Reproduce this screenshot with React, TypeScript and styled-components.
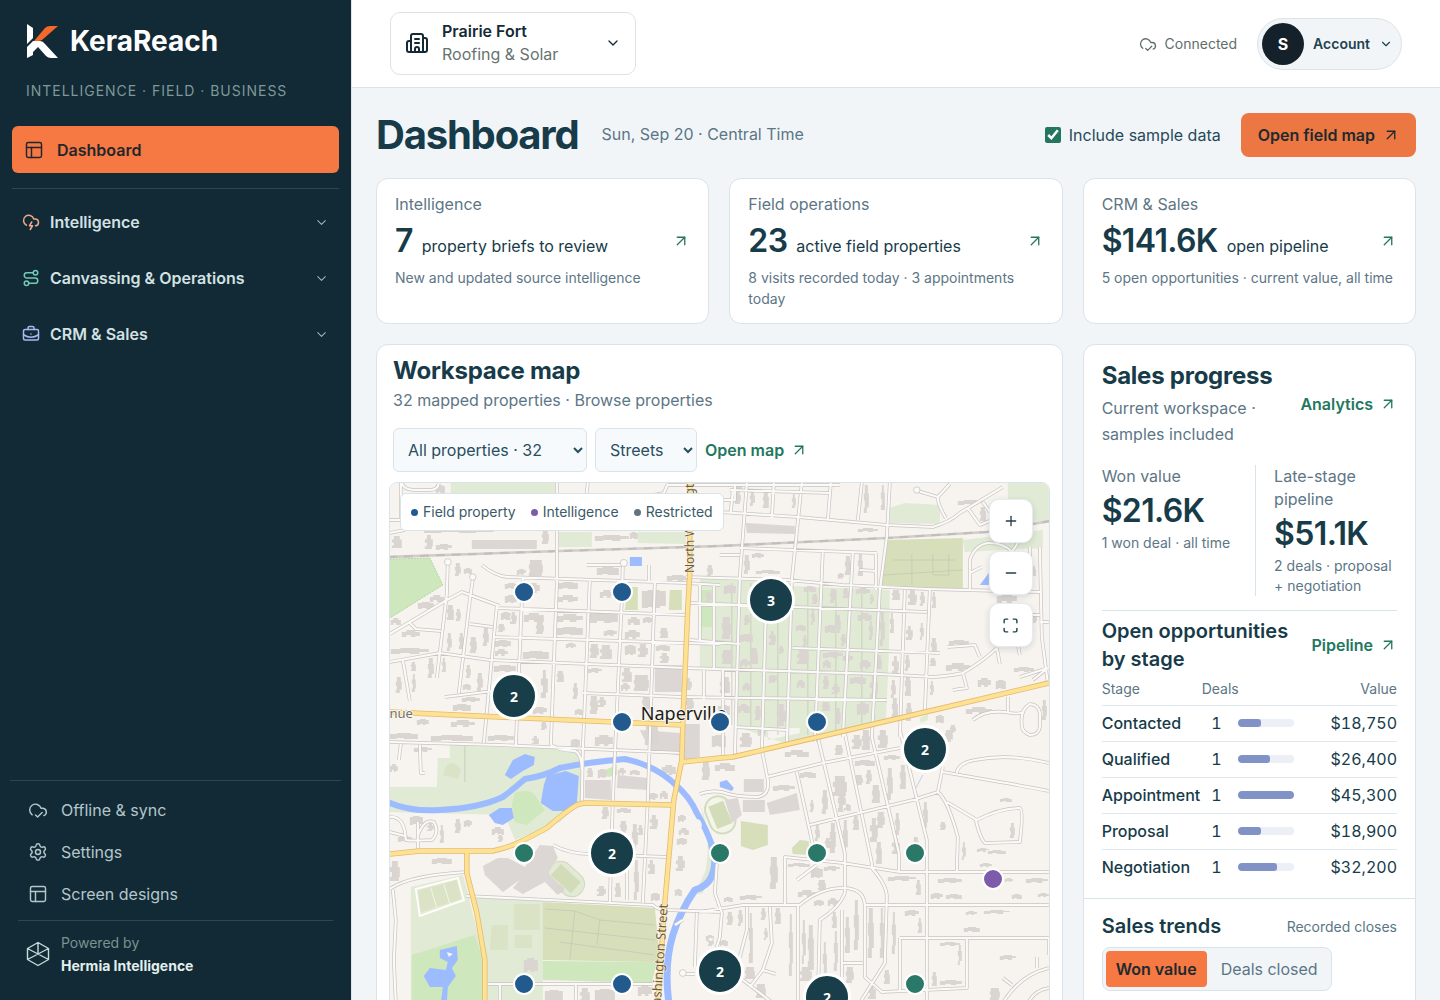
import React, { useState } from "react";
import styled, { createGlobalStyle, css } from "styled-components";
import {
  ArrowUpRight,
  BriefcaseBusiness,
  Building2,
  ChevronDown,
  CloudCheck,
  CloudLightning,
  Maximize,
  Minus,
  PanelsTopLeft,
  Plus,
  Route,
  Settings,
} from "lucide-react";

const color = {
  ink: "#173b49",
  body: "#284e5f",
  muted: "#5c7686",
  green: "#23775f",
  orange: "#f67843",
  line: "#d9e3ea",
  page: "#f1f5f8",
  night: "#112a36",
  blue: "#235a8e",
  teal: "#2a7868",
  purple: "#7d5bab",
  grey: "#66737c",
  cluster: "#183e4a",
};

const GlobalStyle = createGlobalStyle`
  *, *::before, *::after { box-sizing: border-box; }
  body { margin: 0; background: ${color.page}; }
  body, button, select, input { font-family: Inter, "Liberation Sans", sans-serif; }
  body { font-size: 16px; line-height: 24px; color: ${color.ink}; }
  h1, h2, h3, p { margin: 0; }
  a { color: inherit; text-decoration: none; }
  button { cursor: pointer; }
  svg { flex-shrink: 0; }
`;

/* ---------- Shell ---------- */

const Shell = styled.div`
  display: grid;
  grid-template-columns: 352px minmax(0, 1fr);
  height: 100vh;
`;

const Sidebar = styled.aside`
  display: flex;
  flex-direction: column;
  background: ${color.night};
  border-right: 1px solid #dfe6ea;
  color: #b9c9cd;
`;

const Brand = styled.a`
  display: flex;
  align-items: center;
  gap: 12px;
  margin: 24px 26px 0;
  height: 34px;
  color: #fff;
  font-size: 28px;
  font-weight: 700;
  line-height: 34px;
`;

const Tagline = styled.p`
  margin: 23px 26px 0;
  font-size: 14px;
  line-height: 20px;
  letter-spacing: 0.07em;
  color: #7f9799;
  white-space: nowrap;
`;

const Nav = styled.nav`
  display: flex;
  flex-direction: column;
  margin: 25px 12px 0;
`;

const ActiveLink = styled.a`
  display: flex;
  align-items: center;
  gap: 13px;
  height: 47px;
  padding: 0 12px;
  border-radius: 6px;
  background: ${color.orange};
  color: #1f272b;
  font-weight: 600;
`;

const NavGroups = styled.div`
  display: flex;
  flex-direction: column;
  gap: 8px;
  margin-top: 15px;
  padding-top: 9px;
  border-top: 1px solid #2e4650;
`;

const NavGroup = styled.button<{ $tint: string }>`
  display: flex;
  align-items: center;
  gap: 10px;
  height: 48px;
  padding: 0 10px;
  border: 0;
  background: none;
  color: #d3e1e3;
  font-size: 16px;
  font-weight: 600;
  text-align: left;
  span { flex: 1; }
  svg:first-child { color: ${(p) => p.$tint}; }
  svg:last-child { color: #9fb2b8; }
`;

const Utilities = styled.div`
  margin: auto 10px 0;
  padding: 8px 8px 0;
  border-top: 1px solid #2e4650;
`;

const UtilityLink = styled.a`
  display: flex;
  align-items: center;
  gap: 13px;
  height: 42px;
  padding: 0 10px;
  color: #b4c6ca;
`;

const Powered = styled.div`
  display: flex;
  align-items: center;
  gap: 10px;
  height: 80px;
  margin-top: 5px;
  padding: 0 7px 14px;
  border-top: 1px solid #2e4650;
  color: #7b928f;
  font-size: 14px;
  line-height: 23px;
  strong { display: block; font-weight: 700; color: #e3efed; }
  svg { color: #c7dbd6; }
`;

const Main = styled.main`
  display: flex;
  flex-direction: column;
  min-width: 0;
  overflow-y: auto;
  scrollbar-width: none;
`;

/* ---------- Top bar ---------- */

const TopBar = styled.header`
  display: flex;
  align-items: center;
  justify-content: space-between;
  flex-shrink: 0;
  height: 88px;
  padding: 0 38px;
  background: #fff;
  border-bottom: 1px solid #dce2e6;
`;

const Workspace = styled.button`
  display: flex;
  align-items: center;
  gap: 13px;
  width: 246px;
  height: 63px;
  padding: 0 14px 2px;
  border: 1px solid #dfe2e5;
  border-radius: 10px;
  background: #fff;
  color: #142a36;
  font-size: 16px;
  line-height: 23px;
  text-align: left;
  > span { flex: 1; }
  strong { display: block; font-weight: 600; }
  small { font-size: 16px; color: #66736f; }
`;

const TopRight = styled.div`
  display: flex;
  align-items: center;
  gap: 20px;
`;

const Status = styled.span`
  display: flex;
  align-items: center;
  gap: 8px;
  font-size: 14px;
  color: #5f6e6d;
`;

const Account = styled.button`
  display: flex;
  align-items: center;
  gap: 9px;
  height: 52px;
  padding: 0 8px 0 4px;
  border: 1px solid #dce4e8;
  border-radius: 26px;
  background: #f1f5f7;
  color: #1f4251;
  font-size: 14px;
  font-weight: 600;
`;

const Avatar = styled.span`
  display: grid;
  place-items: center;
  width: 42px;
  height: 42px;
  border-radius: 50%;
  background: #14202a;
  color: #fff;
  font-size: 16px;
  font-weight: 700;
`;

/* ---------- Content ---------- */

const Content = styled.div`
  padding: 25px 24px 24px;
`;

const TitleRow = styled.div`
  display: flex;
  align-items: center;
  margin-bottom: 21px;
  h1 {
    font-size: 40px;
    line-height: 44px;
    font-weight: 700;
    letter-spacing: -0.03em;
  }
  p { margin-left: 23px; padding-bottom: 2px; color: ${color.muted}; }
`;

const TitleActions = styled.div`
  display: flex;
  align-items: center;
  gap: 20px;
  margin-left: auto;
`;

const CheckLabel = styled.label`
  display: flex;
  align-items: center;
  gap: 8px;
  color: #26495a;
  input {
    width: 16px;
    height: 16px;
    margin: 0;
    accent-color: ${color.green};
  }
`;

const PrimaryLink = styled.a`
  display: flex;
  align-items: center;
  gap: 7px;
  height: 44px;
  padding: 0 16px 0 17px;
  border-radius: 8px;
  background: #ec7742;
  color: #1d2a2e;
  font-weight: 600;
`;

const Grid = styled.div`
  display: grid;
  grid-template-columns: repeat(3, minmax(0, 1fr));
  gap: 20px;
`;

const panel = css`
  background: #fff;
  border: 1px solid ${color.line};
  border-radius: 12px;
`;

const Kpi = styled.a`
  ${panel}
  display: flex;
  flex-direction: column;
  padding: 14px 18px;
  min-height: 146px;
  line-height: 22px;
  color: ${color.muted};
`;

const KpiRow = styled.span`
  display: flex;
  align-items: center;
  justify-content: space-between;
  height: 40px;
  margin: 6px 0;
  color: ${color.ink};
  svg { color: ${color.green}; }
`;

const KpiValue = styled.span`
  display: flex;
  align-items: baseline;
  gap: 9px;
  strong {
    font-size: 32px;
    line-height: 40px;
    font-weight: 600;
    letter-spacing: -0.02em;
  }
`;

const Note = styled.span`
  font-size: 14px;
  line-height: 21px;
  color: ${color.muted};
`;

const MapPanel = styled.section`
  ${panel}
  grid-column: span 2;
  padding: 10px 12px 12px;
`;

const PanelTitle = styled.h2`
  font-size: 24px;
  line-height: 32px;
  font-weight: 700;
  letter-spacing: -0.01em;
`;

const MapHead = styled.div`
  padding: 0 4px;
  color: ${color.muted};
  h2 { color: ${color.ink}; margin-bottom: 1px; }
`;

const Filters = styled.div`
  display: flex;
  align-items: center;
  gap: 8px;
  margin: 16px 0 10px;
`;

const Select = styled.select<{ $width: number }>`
  width: ${(p) => p.$width}px;
  height: 44px;
  padding: 0 0 0 10px;
  border: 1px solid ${color.line};
  border-radius: 6px;
  background-color: #f7fafc;
  color: ${color.body};
  font-size: 16px;
`;

const TextLink = styled.a`
  display: inline-flex;
  align-items: center;
  gap: 6px;
  color: ${color.green};
  font-weight: 600;
  white-space: nowrap;
`;

/* ---------- Map ---------- */

const MapFrame = styled.div`
  position: relative;
  height: 642px;
  border: 1px solid ${color.line};
  border-radius: 8px;
  overflow: hidden;
  > svg { display: block; width: 100%; height: 100%; }
`;

const Legend = styled.ul`
  position: absolute;
  top: 10px;
  left: 10px;
  display: flex;
  align-items: center;
  gap: 15px;
  height: 38px;
  margin: 0;
  padding: 0 10px;
  list-style: none;
  border: 1px solid ${color.line};
  border-radius: 6px;
  background: #fff;
  color: #395a69;
  font-size: 14px;
`;

const LegendItem = styled.li<{ $dot: string }>`
  display: flex;
  align-items: center;
  gap: 5px;
  &::before {
    content: "";
    width: 7px;
    height: 7px;
    border-radius: 50%;
    background: ${(p) => p.$dot};
  }
`;

const MapControls = styled.div`
  position: absolute;
  top: 16px;
  right: 16px;
  display: grid;
  gap: 8px;
`;

const MapButton = styled.button`
  display: grid;
  place-items: center;
  width: 44px;
  height: 44px;
  padding: 0;
  border: 1px solid #e6ebee;
  border-radius: 10px;
  background: #fff;
  color: #263f4a;
  box-shadow: 0 2px 6px rgba(20, 50, 60, 0.14);
`;

const Pin = styled.button<{ $x: number; $y: number; $tone: string; $cluster?: boolean }>`
  position: absolute;
  left: ${(p) => p.$x}px;
  top: ${(p) => p.$y}px;
  width: ${(p) => (p.$cluster ? 48 : 22)}px;
  height: ${(p) => (p.$cluster ? 48 : 22)}px;
  padding: 0;
  border: ${(p) => (p.$cluster ? 3 : 2)}px solid #fff;
  border-radius: 50%;
  background: ${(p) => p.$tone};
  color: #fff;
  font-family: "Noto Sans", sans-serif;
  font-size: 14px;
  font-weight: 700;
  transform: translate(-50%, -50%);
`;

type Mark = { x: number; y: number; tone: string; count?: number };

const marks: Mark[] = [
  { x: 134, y: 109, tone: color.blue },
  { x: 232, y: 109, tone: color.blue },
  { x: 232, y: 239, tone: color.blue },
  { x: 330, y: 239, tone: color.blue },
  { x: 427, y: 239, tone: color.blue },
  { x: 134, y: 501, tone: color.blue },
  { x: 232, y: 501, tone: color.blue },
  { x: 134, y: 370, tone: color.teal },
  { x: 330, y: 370, tone: color.teal },
  { x: 427, y: 370, tone: color.teal },
  { x: 525, y: 370, tone: color.teal },
  { x: 525, y: 501, tone: color.teal },
  { x: 603, y: 396, tone: color.purple },
  { x: 381, y: 117, tone: color.cluster, count: 3 },
  { x: 124, y: 213, tone: color.cluster, count: 2 },
  { x: 535, y: 266, tone: color.cluster, count: 2 },
  { x: 222, y: 370, tone: color.cluster, count: 2 },
  { x: 330, y: 488, tone: color.cluster, count: 2 },
  { x: 437, y: 514, tone: color.cluster, count: 2 },
];

const streets = [
  // north-west grid
  "M448 562L447 594L437 678", "M473 579L470 600L459 693", "M497 606L484 743", "M523 577L516 745",
  "M557 483L557 585L551 745", "M590 580L583 750L582 802", "M623 565L622 600L613 800L610 903",
  "M655 583L648 800L643 903", "M587 565H623", "M649 565V583",
  "M482 565Q495 576 508 577L686 583L720 585", "M497 608L686 615", "M493 637L686 643L720 644",
  "M390 662L440 653L490 660L686 668L720 669", "M445 697L493 691", "M583 693L682 697",
  "M390 742L500 745L683 753", "M390 634L447 600L462 592L500 606", "M410 623L416 629L441 631", "M470 624L493 627",
  "M403 660L410 701", "M401 744L399 760M420 745L421 773H425", "M551 745Q558 750 575 751Q582 754 582 770",
  "M390 520H401V483M402 483Q404 490 415 490H430Q438 490 439 483", "M627 500L664 493L668 484", "M588 483L586 500",
  "M700 500H735V485M668 485H840", "M390 533L405 530",
  // north-east grid
  "M730 490L830 493", "M720 512L798 517L887 525L933 527Q950 522 960 513L1003 487", "M740 548L877 553", "M720 555H740",
  "M686 577L787 580L843 585L927 589L1040 592", "M690 603L927 612", "M793 648L940 653", "M690 640L740 644",
  "M683 668L880 674L933 677Q950 676 963 673Q985 660 997 648", "M683 697L887 700", "M735 727L787 730",
  "M747 483L740 577L735 757", "M733 490L731 512M774 483L772 518", "M802 483L792 580L787 746", "M831 483L828 520", "M862 483L858 520",
  "M890 483L887 537L880 590L872 737", "M823 550L815 742", "M853 553L843 737", "M767 577L762 753", "M905 590L900 737",
  "M930 590L925 712", "M1040 547L1042 637L1048 683", "M1033 680L1048 668M1020 677L1048 668", "M997 648L1000 664M1018 645L1020 655M948 647L975 645L980 657",
  "M963 673L967 688L953 690", "M1008 697V712", "M973 720Q985 710 1005 712Q1020 715 1022 712", "M1022 725Q1020 710 1030 704Q1042 705 1040 720Q1042 735 1030 735Q1022 732 1022 725",
  "M918 491L938 497Q938 505 946 518M938 497L950 484", "M968 508L980 525L992 520M983 502L990 512", "M970 589V560Q975 545 988 543Q1005 543 1012 552L1018 543",
  "M1030 547V590M1015 615H1040M1030 610V635M1040 622H1049", "M860 570L877 571M876 553V590M970 573L982 567",
  "M700 583V640M714 585V668M700 605H714M704 668V700M723 670V757",
  // south-east quarter
  "M762 750L768 780Q770 795 758 797Q735 797 722 792Q710 790 700 794", "M767 777L823 763L900 748", "M797 772L817 863", "M818 737L845 853V893",
  "M845 733L872 863V868Q887 885 887 897L885 963L860 1003", "M872 737L899 853V872", "M900 730L927 840V1003",
  "M810 825L913 800L938 792L943 767", "M785 904V857L843 863L900 872H1049", "M817 865L797 880",
  "M700 912L743 905H800Q820 888 843 888Q864 888 865 905H1049", "M865 905V977L882 992L967 988V938", "M900 938H1049M900 938V992",
  "M938 792Q948 800 958 837L957 871", "M947 802L977 820Q1000 808 1020 808Q1024 810 1020 842L985 843Q980 838 976 820",
  "M943 772L1000 782Q1030 787 1049 791", "M957 773Q958 763 975 760Q1010 753 1049 763", "M717 864L715 893L722 913L720 937L716 950",
  "M747 907V930L740 957", "M770 907L772 943L763 970L750 987M763 970L776 974", "M798 905V1003", "M845 893Q840 907 820 920L818 1003",
  "M842 910V977M842 963H863", "M743 980L773 1003H800", "M1049 968Q1020 975 1003 1003M1037 968V957M1003 978L1012 985M1049 988Q1035 990 1028 1003",
  "M1049 955V938",
  // south-west quarter
  "M390 889Q410 875 467 872", "M467 896L653 905Q658 910 667 910L720 912", "M393 890L396 920L394 960L396 1003", "M487 984H653",
  "M418 822V850M390 817Q405 816 406 840Q410 841 432 840Q440 832 434 822Q425 818 418 835M390 832L405 836", "M553 845Q570 854 590 854L667 857",
  "M627 850V900", "M697 913L695 967M683 974L695 974", "M683 920L675 925", "M576 984V1003M500 984V1003",
];

const mainRoads = [
  "M690 483V573L688 607L683 723L682 760L674 800L665 903L658 1003",
  "M390 712L500 717L683 725",
  "M682 762L720 758L733 757L797 742L900 718L1049 683",
  "M390 854L420 851H493Q510 847 520 842Q540 832 547 828Q565 812 577 805Q582 803 587 803L673 805",
  "M467 852V873L477 913L485 960V1003",
];

const parks = {
  pale: [
    "M390 787H437L438 758H450V745L575 750L583 760L582 802L560 822L515 840L505 815L390 812Z",
    "M451 483H557V493H451ZM559 532H592V547H559ZM638 532H686V544L638 543Z",
    "M890 508L905 503L940 505L940 524L890 523ZM1008 483H1049V520L1008 525ZM963 540L1043 530V548L965 552Z",
    "M700 578L787 580L792 586L890 590L889 655L886 722L787 744L738 727V672L700 667Z",
    "M411 887L463 875L468 893L484 960V1003H411Z",
    "M473 898L543 901V1003H488L485 960Z",
    "M768 740L800 733V728H768ZM920 718L928 714V720L921 723Z",
    "M700 805Q712 830 706 870L695 895L703 893L715 868L710 840Z",
  ],
  fresh: [
    "M390 559L430 558L443 585L390 618Z",
    "M412 955L475 935L484 962V1003H412Z",
    "M515 793Q530 788 535 795L545 810L527 825L515 822L512 805Z",
    "M543 961L657 962L652 983L543 980Z",
    "M605 770L617 765V775L608 777ZM701 590H713V627H701Z",
  ],
  olive: [
    "M887 540L963 538V589L881 587Z",
    "M543 902L655 908L660 958L653 962L543 960Z",
    "M741 821L768 825V845L753 850L741 846Z",
    "M792 848L800 840L809 841V855L793 854Z",
    "M628 587H638V610H625ZM670 590H682V610H669Z",
  ],
  faint: [
    "M447 765Q455 760 461 770L458 779L443 775Z",
    "M514 904H540V930H514ZM492 925H508V950H490ZM515 935H532V948H515Z",
  ],
};

const water = [
  "M505 775L513 760L525 754L535 757L534 765L523 771L511 779Z",
  "M547 776L566 771L579 776L577 803L567 811L553 811L541 803L544 785Z",
  "M489 815L500 808L512 808L514 818L503 825L495 823Z",
  "M440 950L457 946L458 960L452 968L456 976L448 987L447 1003H441L443 987L430 987L424 976L430 968L446 970L448 962L440 958Z",
  "M630 557H642V566H630Z",
  "M980 585L989 573V585Z",
  "M720 782L727 780L734 788L732 791L720 787Z",
];

const landmarks = [
  "M483 866L498 858L508 858L525 867L540 845L553 846L558 858L548 873L565 890L558 895L545 882L523 894L513 888L520 880L503 892L485 875Z",
  "M767 803L797 793L800 810L770 815ZM743 800H765V812H743ZM744 779H764V792H744Z",
  "M725 800L738 798L742 815L732 823Z",
  "M640 730L680 733L682 756L650 750ZM684 724H700V757L684 760ZM655 665H682V692H655ZM746 523L795 526V534L747 533Z",
  "M472 540H537V549H472ZM585 780H611V800L585 798ZM618 775L648 778V790L617 788Z",
];

// Building footprints: x, y, width, height on the map plane.
const footprints: number[][] = [
  [436,485,9,8],[425,535,8,14],[436,544,16,6],[392,536,10,12],[542,530,7,14],[595,535,34,6],[630,532,8,7],[424,530,70,3],
  [455,563,6,13],[464,568,8,6],[529,560,14,16],[517,569,9,6],[597,567,22,8],[667,575,22,6],[707,565,6,12],
  [505,583,13,6],[505,595,12,8],[527,583,13,10],[558,582,20,7],[558,595,20,7],[642,590,24,18],[430,595,14,7],[418,602,16,7],[600,590,14,8],
  [447,605,7,15],[456,609,5,12],[447,633,5,18],[459,633,5,16],[470,637,7,16],[483,628,6,18],[501,612,10,8],[510,612,7,12],[498,624,7,8],
  [524,613,20,9],[536,622,8,12],[557,614,26,8],[557,627,26,8],[590,612,28,11],[604,630,13,6],[628,617,12,8],[643,617,10,6],[625,630,15,9],[660,628,8,10],
  [402,630,18,7],[391,648,38,6],[391,618,10,7],[495,640,16,7],[495,649,13,7],[523,651,26,8],[566,643,10,5],[590,644,9,14],[600,645,12,14],[625,645,11,10],[638,644,10,13],[656,645,14,6],[660,653,9,10],
  [396,677,6,16],[411,662,5,9],[412,674,4,18],[428,658,6,20],[442,658,4,14],[466,665,5,13],[477,673,6,18],[463,684,8,6],[494,665,22,7],[541,670,7,28],[557,671,7,11],[573,683,5,16],[588,668,14,5],[622,668,10,14],[634,675,15,16],[621,683,9,8],
  [453,704,18,7],[462,697,18,5],[533,707,14,7],[575,709,8,6],[590,696,8,18],[598,697,8,10],[642,697,8,12],[683,678,9,12],[686,697,8,14],
  [390,733,28,6],[417,719,12,6],[451,720,24,7],[431,735,42,6],[488,735,26,6],[541,722,6,8],[532,736,7,8],[571,739,9,8],[595,735,18,11],[645,725,14,20],
  [390,764,8,8],[414,747,18,5],[587,768,6,9],[598,769,9,9],[618,768,8,7],[630,770,10,5],[662,765,14,10],[648,793,10,7],[660,791,8,8],
  [410,816,13,9],[427,823,7,8],[440,825,4,18],[455,819,6,14],[464,820,8,7],[492,827,12,8],[498,834,5,8],[398,836,14,6],[432,858,20,6],[390,861,10,20],
  [602,807,7,12],[617,808,14,5],[620,821,7,12],[632,824,6,26],[638,825,5,10],[650,815,8,14],[634,860,5,40],[648,860,7,14],[651,893,9,8],[597,886,9,10],[615,883,6,14],[555,885,9,8],
  [678,815,8,7],[679,828,10,7],[677,838,10,7],[676,856,9,15],[675,889,7,7],[524,958,14,14],[545,990,18,12],[580,988,10,14],[595,989,20,12],[638,985,14,11],
  [736,485,6,6],[735,491,6,13],[750,491,5,15],[763,492,6,16],[792,494,4,14],[864,485,5,28],[881,485,4,25],[858,528,20,4],[958,500,26,5],[980,507,6,14],[752,553,12,5],[744,555,6,19],[756,570,24,4],[845,556,6,19],[838,573,6,6],[858,554,5,22],
  [724,585,12,9],[706,592,6,10],[804,586,12,6],[812,594,6,10],[830,589,6,14],[843,588,6,10],[856,588,14,6],[870,594,4,10],[892,590,8,10],[908,590,9,15],[920,592,5,14],[932,592,4,16],
  [722,617,9,22],[744,615,6,10],[740,634,13,8],[769,631,7,14],[779,646,5,8],[796,625,10,6],[803,635,4,12],[811,609,4,16],[825,625,12,8],[835,615,6,18],[841,634,5,12],[858,613,14,8],[869,620,4,20],[880,612,5,34],[890,613,4,20],[906,626,7,14],[920,623,4,17],[931,638,6,16],
  [722,650,11,14],[740,659,10,8],[750,648,8,16],[797,650,12,14],[823,652,20,6],[823,660,8,8],[843,655,10,6],[860,660,11,9],[876,655,6,14],[892,656,7,18],[905,655,5,16],[930,658,6,8],[949,640,20,5],[946,663,24,8],
  [720,677,10,16],[743,683,8,8],[769,675,8,8],[797,680,8,8],[823,676,6,13],[832,684,8,10],[850,677,16,7],[870,676,8,22],[891,680,5,18],[905,674,6,22],[930,681,4,14],[978,678,13,9],[996,680,10,9],[1014,667,20,5],
  [718,705,12,12],[738,704,12,9],[755,706,6,14],[777,704,9,22],[822,702,8,9],[835,708,6,16],[857,703,12,12],[892,698,6,20],[906,703,6,18],[966,707,26,7],[936,715,8,8],[1042,700,5,20],[950,725,6,8],[1032,566,4,10],[1032,613,5,10],[997,594,20,9],
  [712,735,14,12],[740,733,12,14],[758,728,8,8],[785,750,24,7],[835,745,8,10],[852,735,10,14],[862,730,8,20],[878,730,10,18],[945,730,8,12],[715,763,20,8],[702,762,8,18],
  [773,785,22,6],[800,772,16,6],[833,776,14,20],[838,792,8,20],[855,760,20,6],[855,775,8,10],[866,770,6,14],[872,785,8,18],[884,755,16,5],[887,768,6,32],[900,765,6,24],[810,800,4,12],[822,790,6,24],[843,804,8,7],[923,802,5,26],
  [815,825,5,16],[825,838,6,10],[830,823,6,30],[843,820,5,34],[853,816,6,14],[870,818,8,24],[877,812,8,16],[876,842,6,22],[895,813,5,22],[892,838,8,16],[913,837,6,16],[940,822,6,8],[962,842,4,18],[1000,798,12,4],[1010,823,5,15],[977,848,12,4],[988,850,18,4],[980,863,12,4],
  [770,857,8,32],[788,863,22,4],[811,868,12,10],[824,866,16,5],[818,880,8,10],[798,890,18,7],[888,876,28,5],[916,880,5,15],[938,878,24,5],[931,893,12,6],[946,894,16,5],[1005,878,8,4],[1026,878,22,5],[1012,894,10,5],[1038,893,11,4],
  [740,895,22,5],[724,897,9,5],[727,912,6,13],[738,910,5,16],[749,913,4,50],[761,908,5,12],[764,928,4,12],[775,908,6,16],[789,914,4,62],[802,920,4,44],[808,925,6,45],[814,900,10,6],[828,898,10,8],[832,912,5,16],[834,931,4,40],[823,942,4,40],[845,917,5,36],[854,900,5,50],[868,908,6,50],[880,908,4,50],[892,912,4,42],
  [905,910,14,6],[918,918,4,15],[966,911,11,4],[984,910,26,4],[964,927,16,5],[940,942,20,4],[958,945,4,20],[932,972,5,14],[940,980,22,5],[1000,955,16,5],[745,967,10,12],[800,967,12,14],[846,967,8,16],[884,970,6,14],[990,988,10,12],[708,938,6,8],[720,940,8,6],[706,935,8,6],[756,984,10,14],[868,985,8,14],
];

// Turns a plain rectangle into a footprint with small setbacks along its long side.
function footprintPath([x, y, w, h]: number[], i: number) {
  const d = Math.min(w, h) > 6 ? 1 + (i % 2) : 1;
  if (w >= h) {
    const a = x + w * 0.25;
    const b = x + w * 0.5;
    const c = x + w * 0.75;
    return `M${x} ${y + d}H${a}V${y}H${c}V${y + d}H${x + w}V${y + h - (i % 3)}H${c}V${y + h}H${b}V${y + h - d}H${a}V${y + h}H${x}Z`;
  }
  const a = y + h * 0.3;
  const b = y + h * 0.55;
  const c = y + h * 0.8;
  return `M${x + d} ${y}V${a}H${x}V${b}H${x + d}V${c}H${x}V${y + h}H${x + w - (i % 3)}V${c}H${x + w}V${a}H${x + w - d}V${y}Z`;
}

const lots =
  "M732 583V725M751 583V726M778 583V735M808 590V735M836 590V735M862 592V730M713 590V640M893 560H955M912 554V585M933 554V575M949 554V575M934 575H949M884 575L962 570M545 909L575 911L600 920L655 925M575 911L570 960M600 920L597 945M545 928L655 940M560 942L655 955M465 746V782";

const railway = "M388 557L560 551L720 546L887 538L987 532L1050 521";

function StreetMap() {
  return (
    <svg viewBox="390 483 659 640" preserveAspectRatio="xMidYMin slice" role="img" aria-label="Street map of Naperville">
      <rect x="380" y="473" width="680" height="660" fill="#f7f3ef" />
      <path d={parks.pale.join("")} fill="#e0ead4" />
      <path d={parks.fresh.join("")} fill="#cfe7bd" />
      <path d={parks.olive.join("")} fill="#d6dfba" />
      <path d={parks.faint.join("")} fill="#dae3c5" />
      <path d="M390 559L430 558L443 585L390 618" fill="none" stroke="#9ccb8a" strokeDasharray="2 1" strokeWidth="0.7" />
      <path d={lots} fill="none" stroke="#c3c9b6" strokeWidth="0.8" />
      <path d="M416 889L458 878L464 900L420 916Z" fill="none" stroke="#fffdfa" strokeWidth="2" />
      <path d="M418 891L457 880L461 899L421 912Z" fill="#dae3c5" />
      <path d="M431 888L437 908M444 884L450 904" stroke="#f4f5ea" strokeWidth="1" />
      <g transform="rotate(42 566 878)">
        <rect x="547" y="866" width="40" height="25" rx="12" fill="#e2ead6" stroke="#d1d9bd" />
        <rect x="553" y="871" width="27" height="15" fill="#d2dcb9" />
      </g>
      <g transform="rotate(-22 720 814)">
        <rect x="707" y="796" width="26" height="38" rx="13" fill="#f4f5ea" stroke="#d3dcbd" strokeWidth="2" />
        <rect x="712" y="803" width="16" height="24" fill="#d2dcb9" />
      </g>
      <path d={landmarks.join("")} fill="#dcd7d4" />
      <path d={footprints.map(footprintPath).join("")} fill="#dad5d1" />
      <g fill="none" stroke="#9dbbff" strokeLinejoin="round" strokeLinecap="round">
        <path d="M388 802Q410 812 440 810Q480 808 503 797Q515 788 525 779Q545 776 560 768Q590 762 625 759Q655 765 676 785" strokeWidth="6" />
        <path d="M676 785Q690 797 697 813Q706 828 712 845" strokeWidth="6" />
        <path d="M712 845Q718 862 712 876Q708 886 695 890Q680 912 673 935Q664 965 669 1003" strokeWidth="7" />
      </g>
      <path d={water.join("")} fill="#9dbbff" />
      <path d="M697 819Q702 819 702 827Q698 828 697 819M447 952L453 954L449 957Z" fill="#f7f3ef" />
      <path d="M923 775L916 788" stroke="#a9c8f4" strokeWidth="0.8" />
      <g fill="none" strokeLinejoin="round">
        <path d={railway} stroke="#d0cdca" strokeWidth="2.6" />
        <path d={railway} stroke="#c0bdba" strokeWidth="2" strokeDasharray="9 7" />
        <path d={streets.join("")} stroke="#c8c4c1" strokeWidth="3.6" />
        <path d={streets.join("")} stroke="#fbfaf8" strokeWidth="2.2" />
        <path d={mainRoads.join("")} stroke="#e6b96f" strokeWidth="5.4" />
        <path d={mainRoads.join("")} stroke="#fde293" strokeWidth="3.8" />
      </g>
      <g fill="#fbfaf8" stroke="#c8c4c1" strokeWidth="0.8">
        <circle cx="448" cy="562" r="3.4" />
        <circle cx="473" cy="577" r="3.2" />
        <circle cx="624" cy="563" r="3.6" />
        <circle cx="917" cy="490" r="3.2" />
        <circle cx="683" cy="973" r="3.4" />
      </g>
      <g fontFamily="'Noto Sans', sans-serif" stroke="#f9f6ef" strokeWidth="2" strokeLinejoin="round" paintOrder="stroke">
        <text x="641" y="720" fontSize="18" fill="#1c1c1c">Naperville</text>
        <text x="413" y="718" fontSize="13" fill="#76706a" textAnchor="end">West Jackson Avenue</text>
        <text transform="translate(694 573) rotate(-90)" fontSize="12" fill="#6d5a35" strokeWidth="1">North Washington Street</text>
        <text transform="translate(668 904) rotate(-86)" fontSize="13" fill="#6d5a35" strokeWidth="1" textAnchor="end">Washington Street</text>
      </g>
    </svg>
  );
}

/* ---------- Sales panel ---------- */

const SalesPanel = styled.section`
  ${panel}
`;

const SalesBody = styled.div`
  padding: 15px 18px 13px;
`;

const Split = styled.div`
  display: flex;
  align-items: center;
  justify-content: space-between;
  gap: 12px;
`;

const SalesIntro = styled.p`
  margin-top: 3px;
  line-height: 26px;
  color: ${color.muted};
`;

const Stats = styled.div`
  display: grid;
  grid-template-columns: max-content minmax(0, 1fr);
  margin-top: 18px;
  padding-bottom: 14px;
  border-bottom: 1px solid ${color.line};
`;

const Stat = styled.div`
  display: flex;
  flex-direction: column;
  line-height: 23px;
  color: ${color.muted};
  strong {
    font-size: 32px;
    line-height: 45px;
    font-weight: 600;
    letter-spacing: -0.02em;
    color: ${color.ink};
  }
  small { font-size: 14px; line-height: 20px; }
  &:first-child { padding-right: 25px; border-right: 1px solid ${color.line}; }
  &:last-child { padding-left: 18px; }
`;

const SubTitle = styled.h3`
  font-size: 20px;
  line-height: 28px;
  font-weight: 600;
`;

const StageHead = styled(Split)`
  margin-top: 6px;
`;

const Table = styled.table`
  width: 100%;
  border-collapse: collapse;
  font-variant-numeric: tabular-nums;
  th { text-align: left; padding: 0; }
  thead th { height: 32px; font-size: 14px; font-weight: 400; color: ${color.muted}; }
  tbody th { width: 100px; font-weight: 500; }
  tbody tr { height: 36px; border-top: 1px solid #dfe8ee; }
  td { padding: 0; }
  th:last-child, td:last-child { text-align: right; }
`;

const Deals = styled.span`
  display: flex;
  align-items: center;
  gap: 16px;
  span { width: 20px; text-align: right; }
`;

const Track = styled.i`
  width: 56px;
  height: 8px;
  border-radius: 4px;
  background: #eceff6;
  overflow: hidden;
`;

const Fill = styled.b`
  display: block;
  height: 8px;
  border-radius: 3px;
  background: #8192c7;
`;

const Trends = styled.div`
  padding: 13px 18px 18px;
  border-top: 1px solid ${color.line};
`;

const Segments = styled.div`
  display: inline-flex;
  height: 44px;
  margin-top: 7px;
  padding: 3px;
  border: 1px solid ${color.line};
  border-radius: 8px;
  background: #f1f5f8;
`;

const Segment = styled.button<{ $on: boolean }>`
  padding: 0 10px;
  margin-right: ${(p) => (p.$on ? 4 : 0)}px;
  border: 0;
  border-radius: 4px;
  background: ${(p) => (p.$on ? color.orange : "transparent")};
  color: ${(p) => (p.$on ? "#1d2a2e" : color.muted)};
  font-size: 16px;
  font-weight: ${(p) => (p.$on ? 600 : 400)};
`;

const stages = [
  { name: "Contacted", deals: 1, value: 18750 },
  { name: "Qualified", deals: 1, value: 26400 },
  { name: "Appointment", deals: 1, value: 45300 },
  { name: "Proposal", deals: 1, value: 18900 },
  { name: "Negotiation", deals: 1, value: 32200 },
];
const topValue = Math.max(...stages.map((s) => s.value));

const kpis = [
  { label: "Intelligence", value: "7", unit: "property briefs to review", note: "New and updated source intelligence" },
  { label: "Field operations", value: "23", unit: "active field properties", note: "8 visits recorded today · 3 appointments today" },
  { label: "CRM & Sales", value: "$141.6K", unit: "open pipeline", note: "5 open opportunities · current value, all time" },
];

const Arrow = () => <ArrowUpRight size={18} strokeWidth={1.75} />;

const BrandMark = () => (
  <svg width="32" height="34" viewBox="0 0 32 34" aria-hidden="true">
    <path d="M1 0L7 4V14L1 20Z" fill="#fff" />
    <path d="M8 17L19 4Q21 2 24 2H32L16 16Q14 17 12 17Z" fill="#f4682c" />
    <path d="M1 23L7 17H14Q17 17 19 20L32 34H25Q22 34 20 32L12 23L7 28V31L1 34Z" fill="#fff" />
  </svg>
);

const HermiaMark = () => (
  <svg width="26" height="26" viewBox="0 0 26 26" fill="none" stroke="currentColor" strokeWidth="1.4" strokeLinejoin="round" aria-hidden="true">
    <path d="M13 1.5L23.5 7.5V18.5L13 24.5L2.5 18.5V7.5ZM13 1.5V13M2.5 7.5L13 13L23.5 7.5M2.5 18.5L13 13L23.5 18.5" />
  </svg>
);

export default function App() {
  const [samples, setSamples] = useState(true);
  const [metric, setMetric] = useState("won");

  return (
    <>
      <GlobalStyle />
      <Shell>
        <Sidebar>
          <Brand href="#"><BrandMark />KeraReach</Brand>
          <Tagline>INTELLIGENCE · FIELD · BUSINESS</Tagline>
          <Nav>
            <ActiveLink href="#"><PanelsTopLeft size={20} strokeWidth={1.75} />Dashboard</ActiveLink>
            <NavGroups>
              <NavGroup $tint="#f0a98a"><CloudLightning size={18} /><span>Intelligence</span><ChevronDown size={15} strokeWidth={1.75} /></NavGroup>
              <NavGroup $tint="#74c8b6"><Route size={18} /><span>Canvassing &amp; Operations</span><ChevronDown size={15} strokeWidth={1.75} /></NavGroup>
              <NavGroup $tint="#a9b8ee"><BriefcaseBusiness size={18} /><span>CRM &amp; Sales</span><ChevronDown size={15} strokeWidth={1.75} /></NavGroup>
            </NavGroups>
          </Nav>
          <Utilities>
            <UtilityLink href="#"><CloudCheck size={20} strokeWidth={1.75} />Offline &amp; sync</UtilityLink>
            <UtilityLink href="#"><Settings size={20} strokeWidth={1.75} />Settings</UtilityLink>
            <UtilityLink href="#"><PanelsTopLeft size={20} strokeWidth={1.75} />Screen designs</UtilityLink>
            <Powered><HermiaMark /><span>Powered by<strong>Hermia Intelligence</strong></span></Powered>
          </Utilities>
        </Sidebar>

        <Main>
          <TopBar>
            <Workspace>
              <Building2 size={24} />
              <span><strong>Prairie Fort</strong><small>Roofing &amp; Solar</small></span>
              <ChevronDown size={16} />
            </Workspace>
            <TopRight>
              <Status><CloudCheck size={18} strokeWidth={1.75} />Connected</Status>
              <Account><Avatar>S</Avatar>Account<ChevronDown size={14} /></Account>
            </TopRight>
          </TopBar>

          <Content>
            <TitleRow>
              <h1>Dashboard</h1>
              <p>Sun, Sep 20 · Central Time</p>
              <TitleActions>
                <CheckLabel>
                  <input type="checkbox" checked={samples} onChange={(e) => setSamples(e.target.checked)} />
                  Include sample data
                </CheckLabel>
                <PrimaryLink href="#">Open field map<Arrow /></PrimaryLink>
              </TitleActions>
            </TitleRow>

            <Grid>
              {kpis.map((k) => (
                <Kpi href="#" key={k.label}>
                  {k.label}
                  <KpiRow>
                    <KpiValue><strong>{k.value}</strong>{k.unit}</KpiValue>
                    <Arrow />
                  </KpiRow>
                  <Note>{k.note}</Note>
                </Kpi>
              ))}

              <MapPanel>
                <MapHead>
                  <PanelTitle>Workspace map</PanelTitle>
                  <p>32 mapped properties · <a href="#">Browse properties</a></p>
                  <Filters>
                    <Select $width={194} aria-label="Properties shown"><option>All properties · 32</option></Select>
                    <Select $width={102} aria-label="Map style"><option>Streets</option></Select>
                    <TextLink href="#">Open map<Arrow /></TextLink>
                  </Filters>
                </MapHead>
                <MapFrame>
                  <StreetMap />
                  {marks.map((m) => (
                    <Pin key={`${m.x}-${m.y}`} $x={m.x} $y={m.y} $tone={m.tone} $cluster={!!m.count} aria-label={m.count ? undefined : "Property"}>
                      {m.count}
                    </Pin>
                  ))}
                  <Legend>
                    <LegendItem $dot={color.blue}>Field property</LegendItem>
                    <LegendItem $dot={color.purple}>Intelligence</LegendItem>
                    <LegendItem $dot={color.grey}>Restricted</LegendItem>
                  </Legend>
                  <MapControls>
                    <MapButton aria-label="Zoom in"><Plus size={16} /></MapButton>
                    <MapButton aria-label="Zoom out"><Minus size={16} /></MapButton>
                    <MapButton aria-label="Fit map"><Maximize size={17} /></MapButton>
                  </MapControls>
                </MapFrame>
              </MapPanel>

              <SalesPanel>
                <SalesBody>
                  <Split>
                    <div>
                      <PanelTitle>Sales progress</PanelTitle>
                      <SalesIntro>Current workspace · samples included</SalesIntro>
                    </div>
                    <TextLink href="#">Analytics<Arrow /></TextLink>
                  </Split>
                  <Stats>
                    <Stat>Won value<strong>$21.6K</strong><small>1 won deal · all time</small></Stat>
                    <Stat>Late-stage pipeline<strong>$51.1K</strong><small>2 deals · proposal + negotiation</small></Stat>
                  </Stats>
                  <StageHead>
                    <SubTitle>Open opportunities by stage</SubTitle>
                    <TextLink href="#">Pipeline<Arrow /></TextLink>
                  </StageHead>
                  <Table>
                    <thead>
                      <tr><th scope="col">Stage</th><th scope="col">Deals</th><th scope="col">Value</th></tr>
                    </thead>
                    <tbody>
                      {stages.map((s) => (
                        <tr key={s.name}>
                          <th scope="row">{s.name}</th>
                          <td>
                            <Deals>
                              <span>{s.deals}</span>
                              <Track><Fill style={{ width: `${Math.round((s.value / topValue) * 100)}%` }} /></Track>
                            </Deals>
                          </td>
                          <td>${s.value.toLocaleString("en-US")}</td>
                        </tr>
                      ))}
                    </tbody>
                  </Table>
                </SalesBody>
                <Trends>
                  <Split><SubTitle>Sales trends</SubTitle><Note>Recorded closes</Note></Split>
                  <Segments>
                    <Segment $on={metric === "won"} onClick={() => setMetric("won")}>Won value</Segment>
                    <Segment $on={metric === "closed"} onClick={() => setMetric("closed")}>Deals closed</Segment>
                  </Segments>
                </Trends>
              </SalesPanel>
            </Grid>
          </Content>
        </Main>
      </Shell>
    </>
  );
}
